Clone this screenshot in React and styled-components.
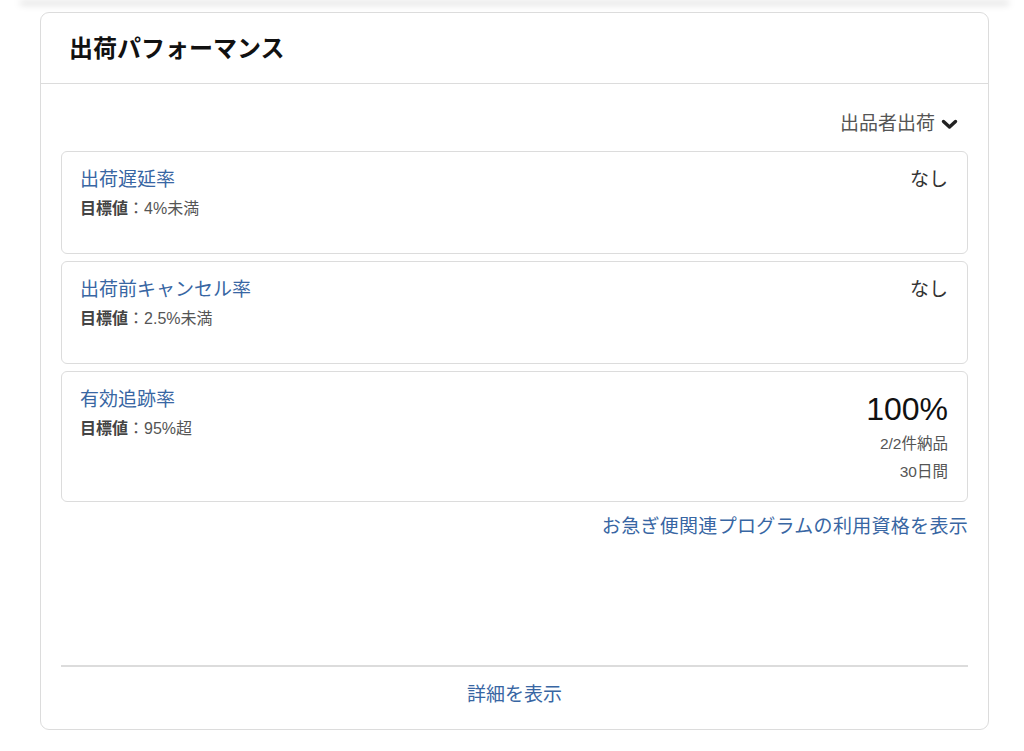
import styled, { createGlobalStyle } from "styled-components"

const GlobalStyle = createGlobalStyle`
    html, body {
        margin: 0;
        padding: 0;
        background: #ffffff;
    }
    body {
        font-family: "Liberation Sans", "Noto Sans CJK JP", sans-serif;
        color: #111;
    }
`

const Page = styled.main`
    display: flex;
    flex-direction: column;
    padding: 0 35px 0 40px;
`

const PrevCardEdge = styled.div`
    height: 2px;
    margin: -2px -20px 0 -20px;
    background: #fff;
    box-shadow: 0 4px 7px rgba(0, 0, 0, 0.28);
`

const Card = styled.section`
    display: flex;
    flex-direction: column;
    margin-top: 12px;
    min-height: 718px;
    box-sizing: border-box;
    border: 1px solid #dcdcdc;
    border-radius: 9px;
    background: #fff;
`

const Header = styled.header`
    display: flex;
    align-items: center;
    height: 71px;
    box-sizing: border-box;
    padding: 0 28px 4px 28px;
    border-bottom: 1px solid #dcdcdc;
`

const Title = styled.h2`
    margin: 0;
    font-size: 24px;
    font-weight: 700;
    color: #111;
`

const Body = styled.div`
    flex: 1;
    display: flex;
    flex-direction: column;
    padding: 28px 20px 0 20px;
`

const Selector = styled.button`
    align-self: flex-end;
    display: flex;
    align-items: center;
    gap: 6px;
    margin: 0 10px 15px 0;
    padding: 0;
    border: none;
    background: none;
    font-family: inherit;
    font-size: 19px;
    line-height: 24px;
    color: #555;
`

const MetricList = styled.div`
    display: flex;
    flex-direction: column;
    gap: 7px;
`

const Metric = styled.div`
    display: flex;
    justify-content: space-between;
    padding: 16px 19px 15px 18px;
    border: 1px solid #dcdcdc;
    border-radius: 6px;
`

const MetricInfo = styled.div`
    display: flex;
    flex-direction: column;
    gap: 5px;
    padding-bottom: 17px;
`

const MetricName = styled.a`
    font-size: 19px;
    line-height: 24px;
    color: #3866a3;
    text-decoration: none;
`

const Target = styled.div`
    font-size: 16px;
    line-height: 24px;
    color: #555;

    b {
        font-weight: 700;
        color: #444;
    }
`

const MetricValue = styled.div`
    display: flex;
    flex-direction: column;
    align-items: flex-end;
`

const NoneText = styled.span`
    font-size: 19px;
    line-height: 24px;
    color: #333;
`

const BigNumber = styled.span`
    font-size: 32px;
    line-height: 42px;
    color: #111;
`

const SubText = styled.span`
    font-size: 15.5px;
    line-height: 28px;
    color: #555;
`

const EligibilityLink = styled.a`
    align-self: flex-end;
    margin-top: 13px;
    font-size: 19px;
    line-height: 24px;
    letter-spacing: 0.3px;
    color: #3866a3;
    text-decoration: none;
`

const Footer = styled.footer`
    display: flex;
    justify-content: center;
    margin: 0 20px;
    padding: 16px 0 22px 0;
    border-top: 2px solid #dcdcdc;
`

const FooterLink = styled.a`
    font-size: 19px;
    line-height: 24px;
    color: #3866a3;
    text-decoration: none;
`

function Chevron() {
    return (
        <svg width="17" height="12" viewBox="0 0 17 12">
            <path d="M2.5 3.5 L8.5 9 L14.5 3.5" fill="none" stroke="#222" strokeWidth="3.4" strokeLinecap="round" strokeLinejoin="round" />
        </svg>
    )
}

const metrics = [
    { name: "出荷遅延率", target: "4%未満" },
    { name: "出荷前キャンセル率", target: "2.5%未満" },
    { name: "有効追跡率", target: "95%超", value: "100%", detail: ["2/2件納品", "30日間"] },
]

export default function App() {
    return (
        <Page>
            <GlobalStyle />
            <PrevCardEdge />
            <Card>
                <Header>
                    <Title>出荷パフォーマンス</Title>
                </Header>
                <Body>
                    <Selector>
                        出品者出荷
                        <Chevron />
                    </Selector>
                    <MetricList>
                        {metrics.map((m) => (
                            <Metric key={m.name}>
                                <MetricInfo>
                                    <MetricName href="#">{m.name}</MetricName>
                                    <Target><b>目標値</b>：{m.target}</Target>
                                </MetricInfo>
                                {m.value ? (
                                    <MetricValue>
                                        <BigNumber>{m.value}</BigNumber>
                                        {m.detail.map((d) => (
                                            <SubText key={d}>{d}</SubText>
                                        ))}
                                    </MetricValue>
                                ) : (
                                    <MetricValue>
                                        <NoneText>なし</NoneText>
                                    </MetricValue>
                                )}
                            </Metric>
                        ))}
                    </MetricList>
                    <EligibilityLink href="#">お急ぎ便関連プログラムの利用資格を表示</EligibilityLink>
                </Body>
                <Footer>
                    <FooterLink href="#">詳細を表示</FooterLink>
                </Footer>
            </Card>
        </Page>
    )
}
